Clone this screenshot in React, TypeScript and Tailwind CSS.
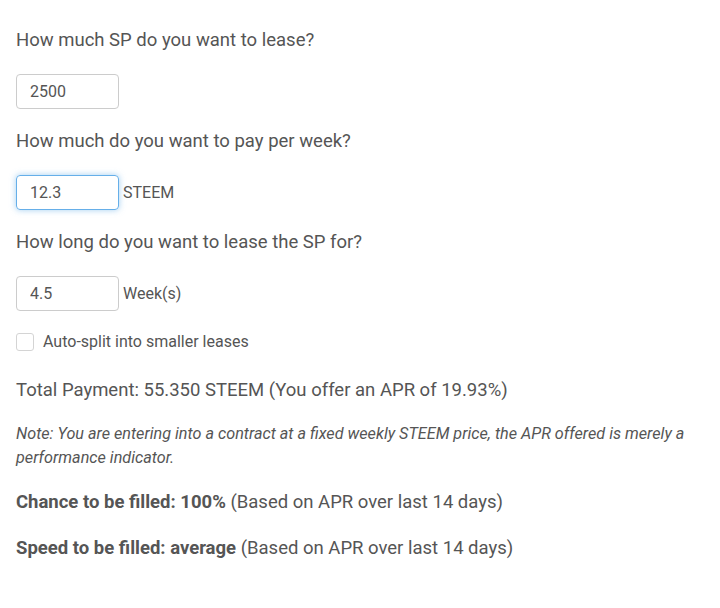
export default function App() {
  return (
    <div
      className="min-h-[608px] w-[720px] bg-white px-4 pt-[27px] text-[#555]"
      style={{ fontFamily: "Roboto, 'Liberation Sans', sans-serif" }}
    >
      <h3 className="text-[18.5px] leading-[26px]">How much SP do you want to lease?</h3>
      <div className="mt-[21px] flex items-center">
        <input
          defaultValue="2500"
          className="h-[35px] w-[103px] rounded border border-[#ccc] px-[13px] text-[16px] text-[#555] outline-none"
        />
      </div>

      <h3 className="mt-[19px] text-[18.5px] leading-[26px]">How much do you want to pay per week?</h3>
      <div className="mt-[21px] flex items-center">
        <input
          defaultValue="12.3"
          className="h-[35px] w-[103px] rounded border border-[#66afe9] px-[13px] text-[16px] text-[#555] shadow-[0_0_6px_rgba(102,175,233,0.6)] outline-none"
        />
        <span className="ml-1 text-[16px]">STEEM</span>
      </div>

      <h3 className="mt-[19px] text-[18.5px] leading-[26px]">How long do you want to lease the SP for?</h3>
      <div className="mt-[21px] flex items-center">
        <input
          defaultValue="4.5"
          className="h-[35px] w-[103px] rounded border border-[#ccc] px-[13px] text-[16px] text-[#555] outline-none"
        />
        <span className="ml-1 text-[16px]">Week(s)</span>
      </div>

      <label className="mt-[22px] flex h-[18px] items-center">
        <span className="h-[18px] w-[18px] rounded-[3px] border border-[#d4d4d4] bg-white" />
        <span className="ml-[9px] text-[16px] leading-[18px]">Auto-split into smaller leases</span>
      </label>

      <p className="mt-[26px] text-[18.5px] leading-[26px]">
        Total Payment: 55.350 STEEM (You offer an APR of 19.93%)
      </p>

      <p className="mt-[19px] text-[16.2px] italic leading-[24px]">
        Note: You are entering into a contract at a fixed weekly STEEM price, the APR offered is merely a performance indicator.
      </p>

      <p className="mt-[20px] text-[18.5px] leading-[24px]">
        <b className="font-bold">Chance to be filled: 100%</b> (Based on APR over last 14 days)
      </p>

      <p className="mt-[22px] text-[18.5px] leading-[24px]">
        <b className="font-bold">Speed to be filled: average</b> (Based on APR over last 14 days)
      </p>
    </div>
  );
}
